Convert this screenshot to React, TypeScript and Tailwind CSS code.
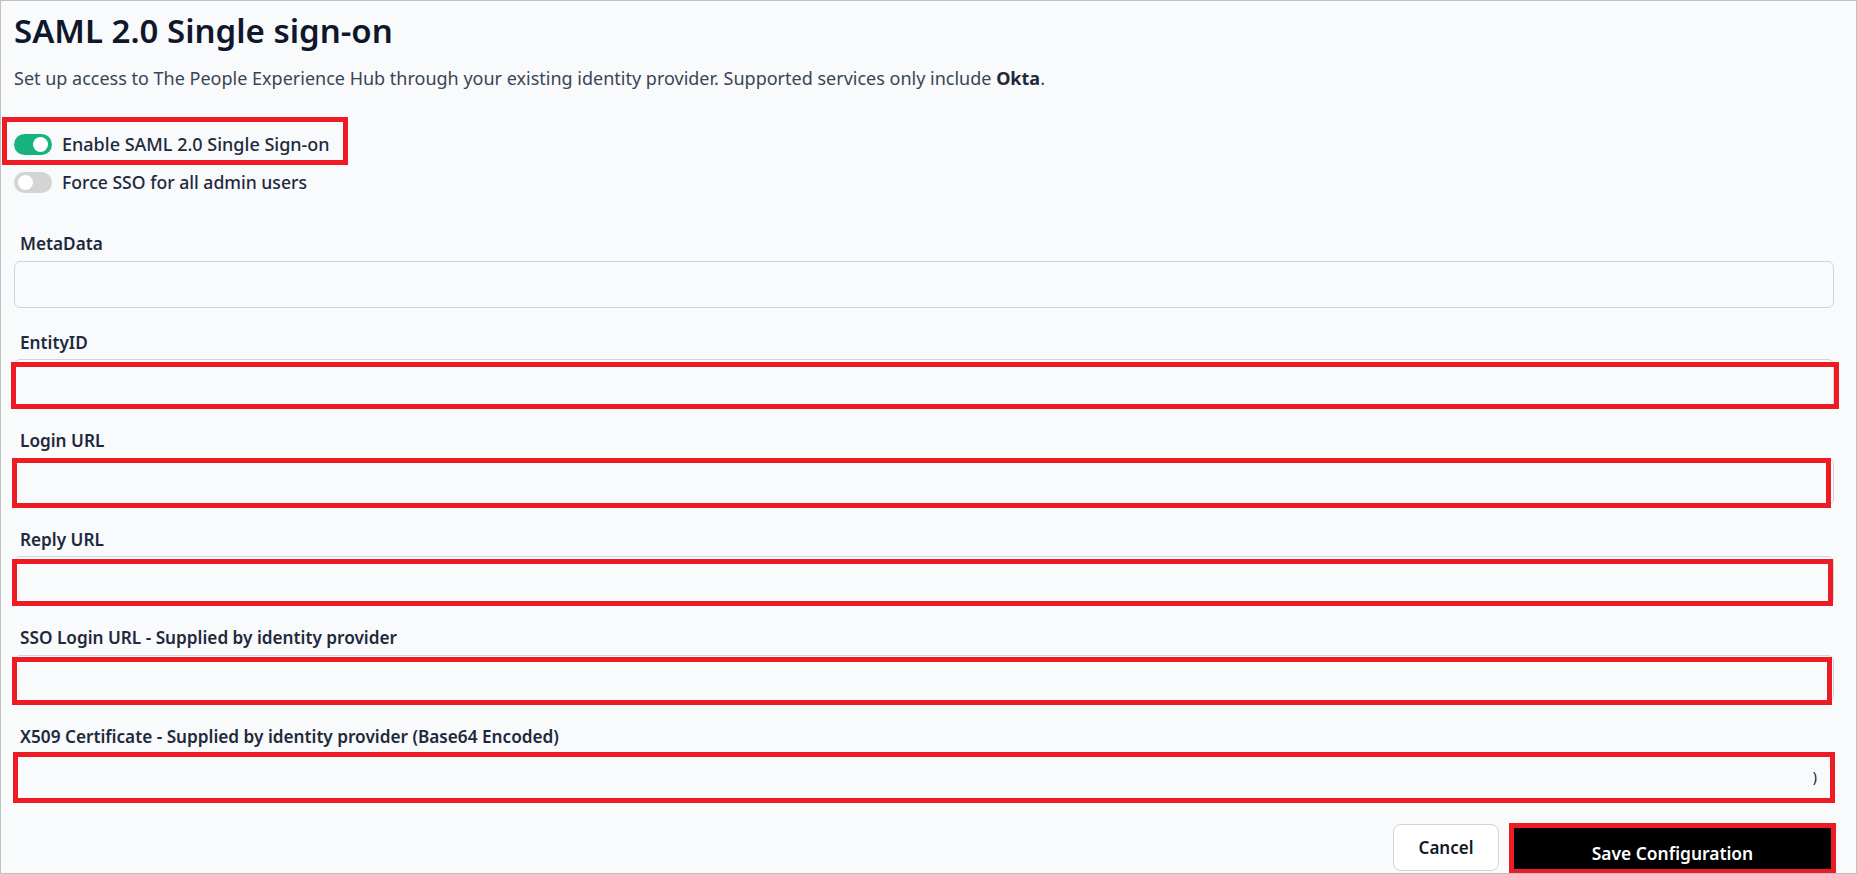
import React from "react";

type Field = { label: string; mark?: string; tail?: string };

const FIELDS: Field[] = [
  { label: "MetaData" },
  { label: "EntityID", mark: "top-[2.5px] bottom-[-2.5px] left-[-3.5px] right-[-4.5px]" },
  { label: "Login URL", mark: "top-[0px] bottom-[-2.5px] left-[-2px] right-[3px]" },
  { label: "Reply URL", mark: "top-[3px] bottom-[-2px] left-[-2px] right-[1px]" },
  { label: "SSO Login URL - Supplied by identity provider", mark: "top-[2.5px] bottom-[-2.5px] left-[-2px] right-[2px]" },
  {
    label: "X509 Certificate - Supplied by identity provider (Base64 Encoded)",
    mark: "top-[-1.5px] bottom-[-2.5px] left-[-1.5px] right-[-1px]",
    tail: ")",
  },
];

function Toggle({ on }: { on: boolean }) {
  return (
    <span
      className={
        on
          ? "flex h-[21px] w-[38px] shrink-0 items-center justify-end rounded-full bg-[#16b37d] px-[4px]"
          : "flex h-[21px] w-[38px] shrink-0 items-center justify-start rounded-full bg-[#d4d4d4] px-[4px]"
      }
    >
      <span className="h-[15px] w-[15px] rounded-full bg-white" />
    </span>
  );
}

function FormField({ field }: { field: Field }) {
  return (
    <div className="flex flex-col">
      <label className="mb-[4.5px] pl-[6px] text-[17.2px] leading-[24px] font-semibold text-[#1e293b]">{field.label}</label>
      <div className="relative">
        <div className="flex h-[47.5px] items-center justify-end rounded-md border border-[#cbd5e1] bg-[#f8fafc] pr-[16px] text-[14px] text-[#111827]">
          {field.tail}
        </div>
        {field.mark && <div className={`pointer-events-none absolute border-[5px] border-[#ed1c24] ${field.mark}`} />}
      </div>
    </div>
  );
}

export default function App() {
  return (
    <div className="h-[874px] overflow-hidden border border-[#c0c0c0] bg-[#f8fafc] pt-[10px] pr-[22px] pl-[13px] font-['Noto_Sans',sans-serif]">
      <h1 className="text-[33px] leading-[40px] font-semibold text-[#0f172a]">SAML 2.0 Single sign-on</h1>
      <p className="mt-[15px] text-[18px] leading-[24px] text-[#3b4454]">
        Set up access to The People Experience Hub through your existing identity provider. Supported services only include{" "}
        <span className="font-bold text-[#1f2937]">Okta</span>.
      </p>

      <div className="mt-[42px] flex flex-col gap-[14px]">
        <div className="relative flex h-[24px] items-center gap-[10px]">
          <Toggle on />
          <span className="text-[18px] leading-[24px] font-medium text-[#1e293b]">Enable SAML 2.0 Single Sign-on</span>
          <div className="pointer-events-none absolute top-[-15px] left-[-12px] h-[48px] w-[346px] border-[5px] border-[#ed1c24]" />
        </div>
        <div className="flex h-[24px] items-center gap-[10px]">
          <Toggle on={false} />
          <span className="text-[17.6px] leading-[24px] font-medium text-[#1e293b]">Force SSO for all admin users</span>
        </div>
      </div>

      <div className="mt-[38px] flex flex-col gap-[22.5px]">
        {FIELDS.map((f) => (
          <FormField key={f.label} field={f} />
        ))}

        <div className="mr-[-2px] flex items-start justify-end gap-[10px]">
          <button className="mt-[1px] h-[47px] w-[106px] rounded-[8px] border border-[#d4d4d8] bg-white text-[17px] leading-[24px] font-semibold text-[#111827]">
            Cancel
          </button>
          <button className="flex h-[51px] w-[327px] items-start justify-center border-[5px] border-[#ed1c24] bg-black pt-[13px] text-[17.4px] leading-[24px] font-semibold text-white">
            Save Configuration
          </button>
        </div>
      </div>
    </div>
  );
}
